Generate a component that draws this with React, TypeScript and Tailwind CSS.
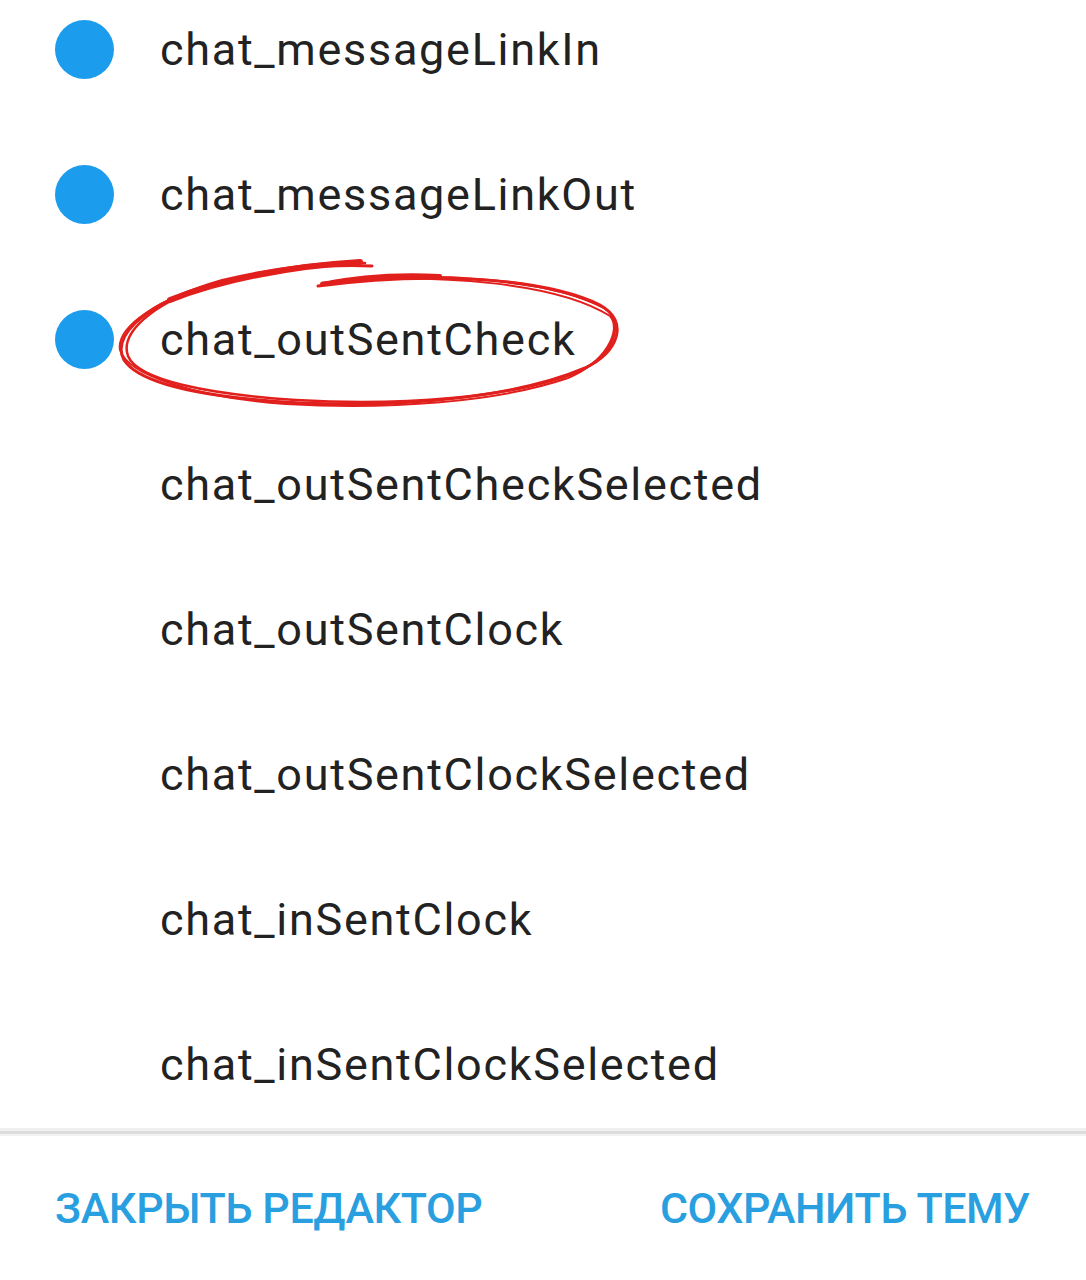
const rows = [
  { name: "chat_messageLinkIn", dot: true },
  { name: "chat_messageLinkOut", dot: true },
  { name: "chat_outSentCheck", dot: true, circled: true },
  { name: "chat_outSentCheckSelected" },
  { name: "chat_outSentClock" },
  { name: "chat_outSentClockSelected" },
  { name: "chat_inSentClock" },
  { name: "chat_inSentClockSelected" },
];

// hand-drawn red marker loop around the highlighted key
function MarkerLoop() {
  return (
    <svg
      className="absolute left-[110px] top-[-17px] pointer-events-none"
      width="520"
      height="170"
      viewBox="110 250 520 170"
      fill="none"
      stroke="#e1201d"
      strokeLinecap="round"
    >
      <path
        d="M318 286 C420 272 540 276 600 305 C630 322 618 352 585 368 C520 396 410 408 300 403 C210 398 140 385 124 360 C112 338 140 308 200 288 C260 270 320 264 372 266"
        strokeWidth="3"
      />
      <path
        d="M322 283 C430 270 548 278 604 308 C626 322 614 356 578 372 C512 398 400 406 296 400 C206 394 138 380 128 356 C120 334 150 304 210 285 C268 268 330 262 365 263"
        strokeWidth="2.5"
      />
      <path
        d="M332 281 C440 274 556 282 610 316 C622 330 606 362 568 378 C498 402 390 410 286 404 C200 398 128 376 120 350 C116 326 160 298 222 280 C280 266 330 262 358 262"
        strokeWidth="2"
      />
      <path d="M170 300 C220 280 290 266 360 262" strokeWidth="6" />
      <path d="M322 284 C360 276 400 274 440 276" strokeWidth="4" />
    </svg>
  );
}

export default function App() {
  return (
    <div
      className="w-[1086px] h-[1280px] bg-white flex flex-col overflow-hidden"
      style={{ fontFamily: "Roboto, 'Noto Sans', sans-serif" }}
    >
      <div className="h-[1128px] overflow-hidden">
        <div className="-mt-[23px] flex flex-col">
          {rows.map((r) => (
            <div key={r.name} className="relative h-[145px] flex items-center">
              <div className="w-[160px] flex items-center pl-[55px]">
                {r.dot && <div className="w-[59px] h-[59px] rounded-full bg-[#1c9cec]" />}
              </div>
              <span className="text-[45px] tracking-[1.7px] text-[#222222] leading-none">{r.name}</span>
              {r.circled && <MarkerLoop />}
            </div>
          ))}
        </div>
      </div>

      {/* shadow line above the footer */}
      <div className="h-[3px] bg-[#f0f0f0]" />
      <div className="h-[3px] bg-[#dcdcdc]" />
      <div className="h-[2px] bg-[#f2f2f2]" />

      <div className="flex-1 flex items-center justify-between pl-[55px] pr-[56px]">
        <button className="text-[43px] tracking-[-0.4px] font-medium text-[#2a9fdf] leading-none">ЗАКРЫТЬ РЕДАКТОР</button>
        <button className="text-[43px] tracking-[-0.4px] font-medium text-[#2a9fdf] leading-none">СОХРАНИТЬ ТЕМУ</button>
      </div>
    </div>
  );
}
